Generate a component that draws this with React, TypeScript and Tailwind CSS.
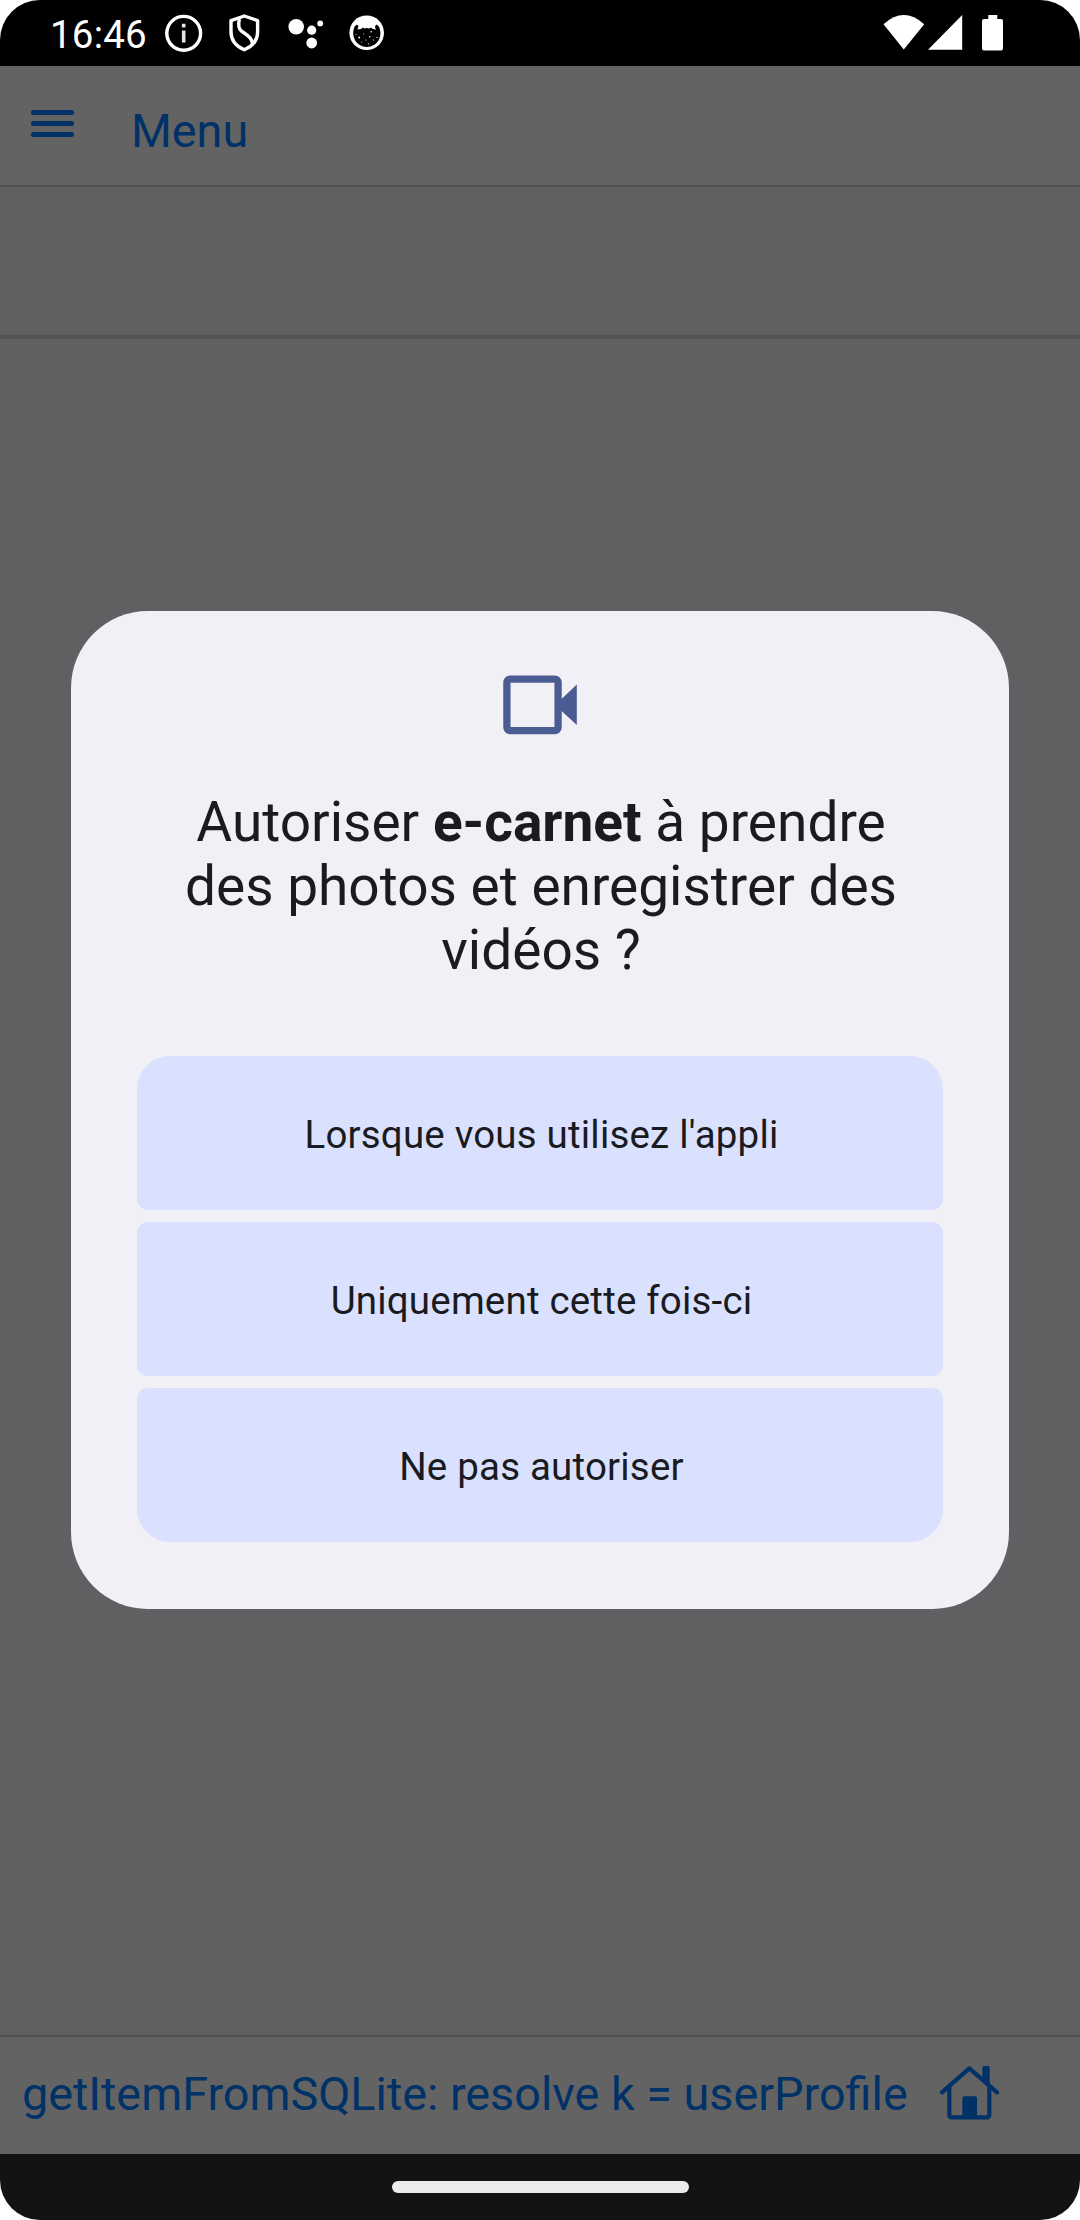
import React from 'react';

function InfoIcon() {
  return (
    <svg className="h-[38px] w-[38px]" viewBox="0 0 38 38" fill="none">
      <circle cx="18.7" cy="19.3" r="16.9" stroke="#fff" strokeWidth="3.4" />
      <path d="M18.7 9.8v3.6M18.7 16.4v12" stroke="#e4e4e4" strokeWidth="3.6" />
    </svg>
  );
}

function ShieldIcon() {
  return (
    <svg className="h-[38px] w-[32px]" viewBox="0 0 32 38" fill="none" stroke="#fff" strokeWidth="3.4" strokeLinejoin="round">
      <path d="M16.3 2 L29.6 6.6 V18 C29.6 26.5 24.5 32.2 16.3 35.8 C8 32.2 3 26.5 3 18 V6.6 Z" />
      <path d="M11.4 5 C10 11 10 14.5 13.5 17.2 C17.5 20.2 23.5 22.5 24.4 29" />
    </svg>
  );
}

function AssistantIcon() {
  return (
    <svg className="h-[38px] w-[36px]" viewBox="0 0 36 38" fill="#fff">
      <circle cx="8.2" cy="12.8" r="7.8" />
      <circle cx="23.7" cy="16.2" r="4.6" />
      <circle cx="32.2" cy="9.4" r="2.9" />
      <circle cx="23.7" cy="29" r="5.4" />
    </svg>
  );
}

function FaceIcon() {
  return (
    <svg className="h-[38px] w-[36px]" viewBox="0 0 36 38">
      <circle cx="17.7" cy="18.8" r="17.3" fill="#fff" />
      <path
        d="M5.6 12.6 L8 10.4 L9.5 12.4 L8.3 15.6 L12.6 14.7 L13.6 13.6 L15.6 14.4 L17.8 14 L20 14.4 L22 13.6 L23.4 14.8 L26.9 15.8 L25.9 12.4 L27.4 10.4 L29.9 12.6 C34.3 22.5 28.5 33 17.8 33 C7.1 33 1.5 22 5.6 12.6 Z"
        fill="#000"
      />
      <g fill="#fff">
        <circle cx="10.2" cy="23.5" r="0.9" />
        <circle cx="20.8" cy="22.8" r="0.8" />
        <circle cx="22.2" cy="17.8" r="0.8" />
        <circle cx="17" cy="26" r="0.6" />
        <circle cx="12.6" cy="28" r="0.5" />
        <circle cx="19.4" cy="29.8" r="0.6" />
        <circle cx="24.4" cy="26" r="0.6" />
        <circle cx="28" cy="23.4" r="0.6" />
        <circle cx="14.6" cy="20" r="0.5" />
        <circle cx="7" cy="20.4" r="0.5" />
      </g>
    </svg>
  );
}

function StatusBar() {
  return (
    <div className="flex h-[66px] w-full items-start rounded-t-[40px] bg-black pl-[50px] text-white">
      <span className="mt-[12px] w-[115px] whitespace-nowrap text-[38.5px] leading-[45px] tracking-[0.2px]">16:46</span>
      <div className="mt-[14px] flex">
        <InfoIcon />
        <div className="ml-[25px]"><ShieldIcon /></div>
        <div className="ml-[28px]"><AssistantIcon /></div>
        <div className="ml-[25px]"><FaceIcon /></div>
      </div>
      <div className="mt-[14px] ml-auto mr-[76px] flex">
        <svg className="h-[38px] w-[42px]" viewBox="0 0 42 38" fill="#fff">
          <path d="M0.5 10.3 Q20.8 -8.1 41.2 10.3 L20.8 35.5 Z" />
        </svg>
        <svg className="ml-[3px] h-[38px] w-[35px]" viewBox="0 0 35 38" fill="#fff">
          <path d="M34.2 1 V35.7 H0 Z" />
        </svg>
        <svg className="ml-[19px] h-[38px] w-[22px]" viewBox="0 0 22 38" fill="#fff">
          <path d="M6.3 1H15.3V5H19Q21 5 21 7V34.5Q21 36.5 19 36.5H2Q0 36.5 0 34.5V7Q0 5 2 5H6.3Z" />
        </svg>
      </div>
    </div>
  );
}

function HomeIcon() {
  return (
    <svg className="h-[56px] w-[60px]" viewBox="90 101 180 168" fill="none" stroke="#003167" strokeWidth="12.5" strokeLinecap="round" strokeLinejoin="round">
      <path d="M96 186 L178 114 L261 186" />
      <path d="M118 170 V253 Q118 261 126 261 H230 Q238 261 238 253 V170" />
      <path d="M157 261 V203 Q157 198 162 198 H196 Q201 198 201 203 V261 Z" fill="#003167" stroke="none" />
      <path d="M217 148 V112 Q217 107 222 107 H234 Q239 107 239 112 V168 Z" fill="#003167" stroke="none" />
    </svg>
  );
}

function CameraIcon() {
  return (
    <svg className="h-[60px] w-[74px]" viewBox="0 0 74 60">
      <rect x="3.9" y="4.2" width="51.2" height="51.4" rx="3.2" fill="none" stroke="#4a5c92" strokeWidth="7.3" />
      <path d="M58 24.6 L73.8 9.6 V50 L58 35.4 Z" fill="#4a5c92" />
    </svg>
  );
}

const choices = [
  { label: "Lorsque vous utilisez l'appli", shape: 'rounded-t-[33px] rounded-b-[11px]' },
  { label: 'Uniquement cette fois-ci', shape: 'rounded-[11px]' },
  { label: 'Ne pas autoriser', shape: 'rounded-t-[11px] rounded-b-[33px]' },
];

function PermissionDialog() {
  return (
    <div role="dialog" className="absolute top-[611px] left-[71px] flex h-[998px] w-[938px] flex-col items-center rounded-[77px] bg-[#f1f0f7] px-[66px] pt-[64px] text-[#1a1b20]">
      <CameraIcon />
      <h1 className="mt-[55px] pl-[2px] text-center text-[55px] leading-[64px] font-normal whitespace-nowrap">
        Autoriser <b className="font-bold">e-carnet</b> à prendre
        <br />
        des photos et enregistrer des
        <br />
        vidéos ?
      </h1>
      <div className="mt-[74px] flex w-full flex-col gap-3">
        {choices.map((c) => (
          <button
            key={c.label}
            className={`flex h-[154px] w-full items-center justify-center bg-[#dae1ff] pt-[3px] pl-[3px] text-[38.5px] leading-[45px] tracking-[0.19px] ${c.shape}`}
          >
            {c.label}
          </button>
        ))}
      </div>
    </div>
  );
}

export default function App() {
  return (
    <div className="bg-white font-['Roboto',sans-serif]">
      <div className="relative flex h-[2220px] w-[1080px] flex-col overflow-hidden">
        <StatusBar />
        <header className="flex h-[121px] items-start border-b-2 border-[#4f4f4f] bg-[#636363] pl-[31px] text-[#003167]">
          <div className="mt-[44px] flex w-[43px] flex-col gap-[6px]">
            <div className="h-[5px] rounded-full bg-[#003167]" />
            <div className="h-[5px] rounded-full bg-[#003167]" />
            <div className="h-[5px] rounded-full bg-[#003167]" />
          </div>
          <span className="mt-[37px] ml-[57px] text-[46.75px] leading-[56px]">Menu</span>
        </header>
        <div className="h-[152px] border-b-4 border-[#535355] bg-[#606062]" />
        <main className="flex-1 bg-[#606062]" />
        <footer className="flex h-[119px] items-start border-t-2 border-[#4f4f4f] bg-[#636363] pl-[22px] text-[#003167]">
          <span className="mt-[29px] text-[46.75px] leading-[56px] whitespace-nowrap">getItemFromSQLite: resolve k = userProfile</span>
          <div className="mt-[27px] mr-[80px] ml-auto">
            <HomeIcon />
          </div>
        </footer>
        <div className="flex h-[66px] justify-center rounded-b-[40px] bg-[#131313] pt-[27px]">
          <div className="h-[12px] w-[297px] rounded-full bg-[#ebebeb]" />
        </div>
        <PermissionDialog />
      </div>
    </div>
  );
}
